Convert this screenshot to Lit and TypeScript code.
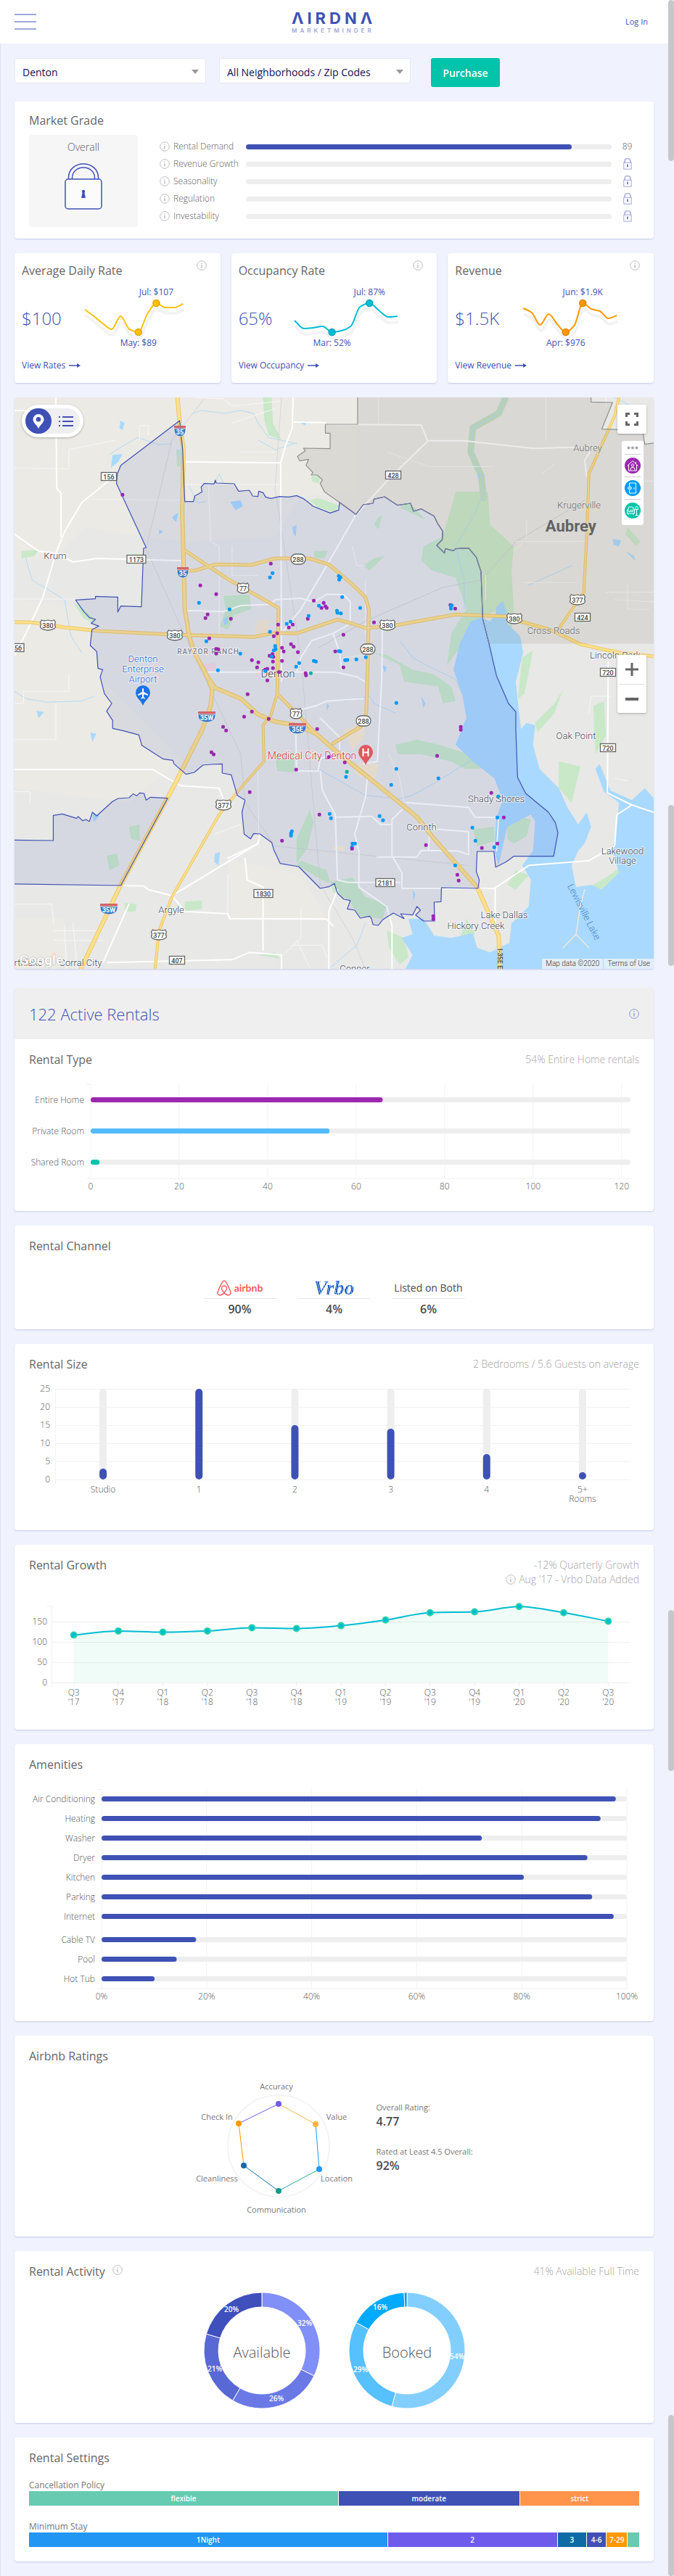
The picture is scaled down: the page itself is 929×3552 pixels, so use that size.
import { LitElement, html, svg, css } from "lit";
import { customElement } from "lit/decorators.js";

type Pt = [number, number];

/* Smooth curve through points that never overshoots them (monotone cubic). */
function curve(p: Pt[]): string {
  const n = p.length;
  const s: number[] = [];
  for (let i = 0; i < n - 1; i++) s.push((p[i + 1][1] - p[i][1]) / (p[i + 1][0] - p[i][0]));
  const m = p.map((_, i) => {
    if (i === 0) return s[0];
    if (i === n - 1) return s[n - 2];
    if (s[i - 1] * s[i] <= 0) return 0;
    return (2 * s[i - 1] * s[i]) / (s[i - 1] + s[i]);
  });
  let d = `M${p[0][0]} ${p[0][1]}`;
  for (let i = 0; i < n - 1; i++) {
    const h = (p[i + 1][0] - p[i][0]) / 3;
    d += `C${p[i][0] + h} ${p[i][1] + m[i] * h} ${p[i + 1][0] - h} ${p[i + 1][1] - m[i + 1] * h} ${p[i + 1][0]} ${p[i + 1][1]}`;
  }
  return d;
}

const infoIcon = () => html`<svg class="info" viewBox="0 0 14 14" width="14" height="14" aria-hidden="true">
  <circle cx="7" cy="7" r="6.3" fill="none" stroke="currentColor" stroke-width="1"></circle>
  <path d="M7 6v4.4M7 3.4v1.4" stroke="currentColor" stroke-width="1.4"></path>
</svg>`;

const smallLock = () => html`<svg width="12" height="16" viewBox="0 0 12 16" aria-label="Locked">
  <path d="M2 6.5V4.5a4 4 0 0 1 8 0v2" fill="none" stroke="#b5bbe2" stroke-width="2"></path>
  <rect x=".8" y="6.3" width="10.4" height="8.9" fill="#fff" stroke="#9fa8da" stroke-width="1"></rect>
  <path d="M6 8.6v3.6" stroke="#3f51b5" stroke-width="1.4"></path>
</svg>`;

/* ------------------------------------------------------------------ map */

const UX = 929 / 1568;
const mx = (u: number) => u * UX;
const my = (v: number) => 540 + v / 3;

const DENTON =
  "418,120 425,240 428,390 430,455 450,455 453,432 470,415 468,395 475,380 498,382 501,366 503,378 545,381 555,412 580,408 588,432 600,434 602,412 612,418 618,436 630,442 650,434 672,436 690,430 705,442 716,456 728,474 768,502 788,490 790,458 828,508 845,468 868,462 870,445 895,435 912,455 925,470 955,462 962,495 980,485 1010,515 1018,545 1030,578 1029,612 1016,636 1034,668 1036,650 1055,658 1060,650 1090,647 1108,685 1119,745 1123,940 1138,1045 1155,1175 1183,1290 1200,1325 1200,1400 1204,1595 1223,1662 1276,1740 1292,1783 1298,1825 1288,1922 1195,1922 1178,1945 1153,1967 1149,1902 1110,1902 1108,1985 1115,2020 1112,2055 1027,2052 1026,2110 1010,2112 1011,2190 985,2190 967,2165 978,2145 970,2130 960,2165 932,2160 940,2180 915,2157 890,2185 880,2208 868,2205 864,2180 860,2170 838,2178 825,2145 808,2140 815,2105 800,2100 785,2075 778,2035 765,2048 745,2055 720,2010 695,1965 652,1952 637,1895 632,1865 605,1830 590,1828 583,1850 568,1830 563,1740 570,1690 552,1670 538,1585 517,1578 517,1540 490,1542 472,1545 452,1575 433,1583 405,1540 402,1525 380,1520 330,1463 323,1420 285,1402 262,1393 262,1360 248,1322 260,1290 243,1250 233,1180 239,1150 228,1145 225,1075 210,1050 214,985 230,970 212,958 222,942 208,935 195,910 176,862 222,857 222,847 274,850 274,912 281,887 329,890 334,648 340,645 271,380 273,340 281,305";
const SOUTHWEST =
  "20,1855 124,1857 124,1753 145,1747 178,1765 182,1758 192,1775 200,1770 208,1778 215,1740 225,1755 262,1695 275,1683 300,1680 310,1664 318,1672 325,1660 335,1662 340,1690 350,1678 390,1682 281,2043 20,2036";
const SHARED =
  "790,458 828,508 845,468 868,462 870,445 895,435 912,455 925,470 955,462 962,495 980,485 1010,515 1018,545 1030,578 1029,612 1016,636 1034,668 1036,650 1055,658 1060,650 1090,647 1108,685 1119,745 1123,940 1138,1043";
const AUBREY_EDGE =
  "832,10 832,135 757,135 757,172 768,172 768,236 706,234 710,245 692,268 697,286 718,280 712,305 728,335 724,345 738,345 750,365 745,380 755,415";

const LAKE =
  "1095,950 1120,935 1140,950 1160,905 1170,865 1180,920 1180,960 1210,1010 1217,1080 1200,1200 1205,1290 1212,1395 1225,1370 1245,1380 1240,1460 1255,1560 1300,1640 1320,1720 1345,1790 1365,1740 1375,1800 1360,1870 1345,1900 1330,1960 1340,2050 1375,2040 1400,2060 1440,1990 1425,1900 1435,1800 1440,1700 1405,1655 1385,1560 1395,1540 1420,1650 1470,1690 1500,1640 1530,1700 1530,2400 940,2400 960,2330 935,2260 960,2245 950,2180 985,2180 1010,2250 1050,2260 1100,2240 1110,2300 1140,2320 1185,2280 1190,2200 1230,2130 1235,2020 1215,1960 1240,1900 1245,1780 1235,1750 1180,1800 1160,1960 1150,1900 1155,1760 1170,1690 1150,1600 1100,1530 1060,1460 1085,1350 1075,1250 1055,1150 1070,1040";

const GREENS = [
  "1060,415 1135,415 1140,550 1195,640 1190,740 1195,900 1190,1000 1180,940 1168,870 1155,905 1100,950 1070,1060 1040,1130 1050,1000 1085,900 1060,770 1005,740 980,700 985,640 1030,600",
  "520,845 580,840 585,900 545,925 530,985 512,970 525,900", "600,2330 640,2320 650,2345", "640,1500 685,1490 685,1575 645,1570",
  "775,2070 810,2100 835,2170 890,2180 900,2120 850,2090 820,2010 760,2030 690,1960 700,1940 760,1980",
  "870,1080 900,1090 960,1150 1010,1170 1050,1220 1060,1280 1030,1290 1020,1220 940,1200 930,1130",
  "920,1460 970,1440 1020,1460 1090,1500 1120,1560 1080,1560 1050,1530 980,1500 925,1500", "1100,1810 1150,1800 1150,1860 1110,1880",
  "1080,1200 1150,1250 1195,1310 1190,1340 1140,1320 1120,1270 1090,1240", "690,1850 720,1730 730,1780 715,1890 690,1950",
  "300,1800 325,1790 325,1860 305,1850", "248,1920 272,1910 278,1960 255,1980", "730,660 762,658 755,690 732,688",
  "612,24 632,24 635,130 655,200 625,180 615,120", "720,450 740,440 790,470 780,500 740,480", "725,350 745,350 742,380 725,370",
  "290,2115 318,2120 315,2150 292,2150", "430,2110 470,2105 470,2140 430,2150", "1215,1100 1240,1070 1220,1250 1205,1270",
  "1245,1370 1290,1290 1310,1230 1290,1330 1250,1410", "1300,1530 1350,1550 1330,1700 1300,1640", "1380,1300 1405,1280 1410,1420 1385,1500",
  "1370,2050 1410,2010 1450,1960 1430,2060 1400,2075", "900,2230 940,2260 950,2340 930,2370 905,2300", "1200,1980 1230,2000 1200,2060 1180,2040",
  "1085,2180 1105,2240 1090,2300 1070,2260", "1280,2200 1310,2180 1330,2290 1290,2330", "170,870 195,900 215,935 225,960 195,940",
  "50,660 90,655 80,680 50,690", "880,520 890,510 880,570 870,550", "845,720 870,690 895,680 860,740", "930,480 945,460 965,480 990,530",
  "1180,1790 1210,1760 1235,1770 1225,1840 1195,1870 1180,1850", "410,240 420,240 420,310 412,310", "1460,560 1490,620 1480,640 1455,590",
  "1505,2090 1521,2100 1515,2140 1500,2130",
];

const PONDS = [
  "262,262 285,258 275,290 258,315", "535,455 560,450 565,475 548,490", "400,520 415,500 410,540", "280,120 290,130 285,160 278,150",
  "85,1320 103,1325 90,1350", "210,1410 224,1415 215,1450", "500,1910 512,1905 508,1960 498,1945", "680,560 690,552 688,600 683,590",
  "1155,890 1170,865 1175,900 1180,960 1150,960", "520,940 530,930 530,960 522,965", "980,1260 990,1290 985,1310", "890,1130 900,1140 895,1165",
  "1425,610 1445,615 1440,640 1428,635", "960,2060 966,2080 962,2110", "370,570 380,580 370,590", "215,1740 232,1755 218,1780",
  "760,1290 766,1300 760,1320", "700,130 712,120 710,140", "1110,340 1118,345 1114,370", "1455,660 1475,680 1478,700",
];

const HIGHWAYS: [string, number][] = [
  ["412,10 418,130 427,240 424,500 430,900 440,1010 452,1080 480,1170 494,1230 490,1300 470,1400 405,1630 281,2040 185,2400", 5],
  ["478,1170 500,1225 560,1270 600,1335 640,1365 690,1380 735,1415 790,1500 860,1600 970,1760 1010,1850 1110,2050 1160,2250 1163,2400", 5],
  ["20,953 75,955 150,975 230,990 400,1005 590,1015 640,998 690,1000 740,970 785,943 820,960 850,978 910,970 1060,922 1180,930 1210,950 1280,985 1350,1045 1440,1080 1530,1097", 4],
  ["430,742 455,740 500,715 585,717 640,690 720,690 765,715 815,790 850,850 858,900 856,1100 852,1330 840,1385 775,1455", 4],
  ["428,655 530,775 648,895 645,1250 700,1350 735,1415", 4],
  ["645,1250 630,1340 612,1380 614,1530 555,1650 510,1750 400,2090 370,2230 360,2400", 3],
  ["1442,10 1430,100 1370,340 1365,600 1358,830 1300,980", 3],
];

const STREETS = [
  "34,590 90,660 130,668 170,705 225,690 430,700", "130,668 150,580 190,460 273,340", "130,668 100,850 60,1000 34,1090",
  "430,290 653,295 655,1200", "653,295 665,220 680,150 682,24", "680,125 757,128", "757,135 980,138 995,205 905,360 828,510 760,720 700,900 655,1000",
  "995,203 1080,203 1240,235 1380,228", "430,905 520,910 560,885 630,880 640,860 700,855 730,870 760,838 800,840 815,870 815,960 775,1000 725,1030 700,1100 690,1160",
  "480,1160 780,1160 830,1180 850,1200", "775,1000 790,1080 795,1150", "890,960 888,1190 878,1530 845,1540", "34,1563 355,1563 420,1630 510,1640 520,1690",
  "283,2043 335,2045 345,2060 400,2085 600,1870 605,1830", "400,2085 430,2150 530,2160 535,2180 760,2182 775,2210",
  "688,1400 690,1570 740,1570 745,1520 780,1490", "745,1570 750,1650 780,1750 785,2020 810,2030 930,2030", "780,1760 865,1757 885,1790 910,1790",
  "855,1590 850,1680 825,1830 835,1900 835,2050 900,2130 912,2210 912,2388", "935,1730 912,1770 912,1920 935,1990 935,2055 1150,2055 1230,1960 1370,1940 1430,1880 1435,1750 1470,1710 1521,1740",
  "945,1700 1090,1720 1105,1760 1160,1762 1155,1900", "877,1925 970,1925 980,1898 1065,1900 1090,1915 1090,1820 1000,1808 997,1900",
  "530,1930 600,1870", "570,1930 575,2020 612,2050 612,2310", "250,2362 540,2350 580,2320 655,2330 655,2388",
  "745,1350 790,1430 790,1480", "690,1320 735,1300 760,1280 845,1270", "300,2120 240,2360", "1415,1120 1413,1660 1470,1710",
  "1380,228 1360,285 1365,350", "130,24 132,400 142,420 142,600", "34,78 130,78", "786,2060 765,2150 765,2388", "1152,2055 1152,2200",
];

const LANES = [
  "34,315 160,320 160,240 270,200", "215,445 425,450", "34,858 175,858", "430,385 650,385", "485,385 490,620 510,640 510,1000", "34,1290 55,1290 55,1240 160,1240 160,1170",
  "34,1655 70,1655 70,1700", "850,780 850,1000", "880,24 880,140", "1410,24 1410,60", "1225,530 1225,610 1195,660", "1460,370 1521,370",
  "34,1440 130,1440 130,1290", "540,640 540,760 600,760", "700,1080 700,1150", "600,1560 602,1830", "530,2000 530,2160", "34,2120 120,2120 125,2200",
  "560,250 640,250", "540,130 640,70", "325,200 325,140 345,140 345,180", "1460,800 1460,900 1510,900", "1420,1260 1375,1260 1370,1330", "700,2140 700,2260 660,2330",
  "450,24 520,30 540,60 650,40", "800,1100 850,1090", "940,1700 930,1600 905,1500", "1430,1600 1460,1610", "1290,300 1260,340", "500,1830 560,1790",
  "820,640 830,720 850,720", "1130,760 1130,860", "1200,620 1360,620", "1220,790 1340,790", "1270,24 1270,200", "900,250 1000,310 1150,310",
  "170,2200 180,2388", "150,2210 155,2388", "125,2230 230,2230", "125,2270 240,2270", "680,2290 750,2290 760,2340", "690,2270 720,2380", "1410,830 1521,830", "1430,860 1521,870",
];

const CREEKS = [
  "448,90 470,78 520,90 560,78 590,90 600,130 625,190 690,215", "255,260 290,220 320,190 370,220 400,215", "60,690 75,780 150,860 165,1010 190,1080",
  "34,1240 60,1270 110,1285 190,1280 220,1260", "930,1030 960,1100 990,1130 1060,1190 1075,1250", "740,1560 800,1620 850,1670 930,1685 960,1670 1020,1610 1100,1520 1140,1500",
  "440,390 460,460 480,455", "1175,30 1160,90 1100,150 1095,250 1120,350 1125,420 1100,520 1060,640 1080,780 1080,900", "800,1280 860,1260 870,1290 920,1330",
  "600,200 640,240 690,212", "500,380 510,340 520,380", "1230,800 1330,720", "770,2380 830,2290 850,2200", "1430,24 1500,90",
];

const PURPLE =
  "285,427 630,712 466,802 503,838 730,865 753,874 748,895 757,888 760,895 483,922 478,937 537,940 716,940 647,964 681,964 672,976 870,955 645,1000 637,1012 799,1006 487,1021 503,1064 508,1066 503,1084 656,1060 677,1045 683,1055 660,1075 693,1078 780,1075 627,1093 634,1085 636,1097 586,1111 601,1120 598,1141 635,1117 656,1114 635,1144 617,1150 622,1147 649,1160 799,1141 711,1165 712,1174 1048,883 1059,898 622,1195 576,1252 586,1324 568,1345 625,1354 519,1387 526,1402 738,1396 1072,1387 1072,1399 492,1492 497,1501 765,1511 802,1534 689,1564 1017,1507 581,1657 1143,1660 743,1750 1172,1762 656,1858 991,1876 1157,1870 1121,1888 1064,1999 1067,2023 1008,2170 1008,2182";
const BLUE =
  "634,751 628,769 788,763 789,778 792,768 796,850 463,874 742,886 534,901 838,895 784,907 785,915 793,917 718,928 676,952 667,961 628,994 480,1033 640,1052 637,1070 641,1066 788,1073 792,1075 559,1084 632,1096 851,1099 829,1108 803,1111 808,1110 730,1114 735,1117 696,1123 689,1138 507,1153 617,1156 1049,888 1051,884 1049,898 922,1288 922,1561 1020,1600 805,1594 910,1627 1159,1675 767,1747 770,1765 883,1756 891,1773 1157,1762 679,1819 677,1828 677,1837 820,1870 826,1870 819,1884 1099,1804 1106,1858 1150,1885 1059,1960";
const TEAL = "723,1165 807,1573";

type Label = { t: string; x: number; y: number; c?: string };
const PLACES: Label[] = [
  { t: "Aubrey", x: 1367, y: 235, c: "dim" },
  { t: "Krugerville", x: 1347, y: 471, c: "dim" },
  { t: "Krum", x: 129, y: 682 },
  { t: "Cross Roads", x: 1288, y: 990, c: "dim" },
  { t: "Lincoln Park", x: 1432, y: 1092 },
  { t: "Denton", x: 647, y: 1169, c: "town" },
  { t: "Oak Point", x: 1340, y: 1425 },
  { t: "Shady Shores", x: 1155, y: 1687 },
  { t: "Corinth", x: 981, y: 1803 },
  { t: "Lakewood", x: 1449, y: 1902 },
  { t: "Village", x: 1449, y: 1942 },
  { t: "Argyle", x: 399, y: 2146 },
  { t: "Lake Dallas", x: 1173, y: 2167 },
  { t: "Hickory Creek", x: 1107, y: 2212 },
  { t: "Corral City", x: 187, y: 2364 },
  { t: "rthlake", x: 66, y: 2364 },
  { t: "Copper", x: 826, y: 2388 },
  { t: "Denton", x: 333, y: 1108, c: "air" },
  { t: "Enterprise", x: 333, y: 1150, c: "air" },
  { t: "Airport", x: 333, y: 1192, c: "air" },
  { t: "Medical City Denton", x: 725, y: 1510, c: "med" },
  { t: "RAYZOR RANCH", x: 485, y: 1074, c: "hood" },
];

const ROUTES: [string, number, number, "box" | "us" | "oval" | "int"][] = [
  ["156", 254, 351, "box"], ["1173", 318, 693, "box"], ["428", 914, 345, "box"], ["424", 1356, 933, "box"], ["56", 42, 1059, "box"],
  ["720", 1415, 1162, "box"], ["720", 1414, 1473, "box"], ["2181", 896, 2031, "box"], ["1830", 613, 2076, "box"], ["407", 412, 2352, "box"],
  ["77", 566, 812, "us"], ["77", 688, 1332, "us"], ["380", 111, 966, "us"], ["380", 406, 1008, "us"], ["380", 902, 966, "us"],
  ["380", 1196, 940, "us"], ["377", 1344, 862, "us"], ["377", 520, 1711, "us"], ["377", 369, 2247, "us"],
  ["288", 693, 693, "oval"], ["288", 856, 1066, "oval"], ["288", 846, 1363, "oval"],
  ["35", 419, 163, "int"], ["35", 426, 748, "int"], ["35W", 481, 1344, "int"], ["35E", 692, 1392, "int"], ["35W", 254, 2139, "int"],
];

function shield([t, u, v, kind]: [string, number, number, string]) {
  const x = Math.round(mx(u)), y = Math.round(my(v));
  const w = t.length * 5 + 6;
  if (kind === "int") {
    const h = t.length > 2 ? 12 : 8;
    return svg`<g transform="translate(${x} ${y})">
      <path d="M${-h} -3C${-h} 3 ${-h + 2} 7 0 8C${h - 2} 7 ${h} 3 ${h} -3Z" fill="#3f78c4" stroke="#fff" stroke-width=".6"></path>
      <path d="M${-h} -3.5V-7H${h}V-3.5Z" fill="#d2656b"></path>
      <text class="rt white" y="5">${t}</text></g>`;
  }
  const shape =
    kind === "box"
      ? svg`<rect x=${-w / 2} y="-5.5" width=${w} height="11"></rect>`
      : kind === "oval"
        ? svg`<rect x="-10" y="-7" width="20" height="14" rx="7"></rect>`
        : svg`<path d="M${-w / 2 + 2} -7Q${-w / 4} -5 0 -7Q${w / 4} -5 ${w / 2 - 2} -7L${w / 2} -4Q${w / 2 - 2} -1 ${w / 2} 2Q${w / 2} 6 0 7Q${-w / 2} 6 ${-w / 2} 2Q${-w / 2 + 2} -1 ${-w / 2} -4Z"></path>`;
  return svg`<g transform="translate(${x} ${y})" fill="#fff" stroke="#666" stroke-width="1.3">${shape}
    <text class="rt" y="4">${t}</text></g>`;
}

const dots = (list: string, fill: string) =>
  list.split(" ").map((p) => {
    const [u, v] = p.split(",").map(Number);
    return svg`<rect x=${(mx(u) - 2.5).toFixed(1)} y=${(my(v) - 2.5).toFixed(1)} width="5" height="5" rx="2" fill=${fill}></rect>`;
  });

@customElement("market-map")
export class MarketMap extends LitElement {
  static styles = css`
    :host { display: block; position: relative; height: 788px; border-radius: 4px; overflow: hidden; box-shadow: 0 1px 2px #c5cbea; font-family: "Roboto", sans-serif; }
    .canvas { display: block; width: 100%; height: 100%; }
    .geo * { vector-effect: non-scaling-stroke; }
    text { font-size: 13px; fill: #454a54; text-anchor: middle; paint-order: stroke; stroke: #fff; stroke-width: 2px; stroke-opacity: .7; stroke-linejoin: round; }
    .dim { fill: #6c6c6c; stroke: #e4e4e2; }
    .town { font-size: 15px; fill: #3a3a3a; }
    .air { fill: #2265d4; }
    .med { fill: #cf2936; font-size: 14px; }
    .hood { font-size: 10px; font-weight: 500; fill: #7c8499; letter-spacing: 1px; }
    .big { font-size: 22px; font-weight: 700; fill: #636363; stroke: #ddd; }
    .lake { fill: #4c86c8; stroke: none; }
    .rt { font-size: 9px; font-weight: 500; fill: #444; stroke: none; }
    .white { fill: #fff; font-weight: 700; }
    .google { font-size: 19px; fill: #fff; stroke: #8d8d8d; stroke-width: 1px; font-weight: 500; }
    button { border: 0; padding: 0; background: #fff; display: grid; place-items: center; cursor: pointer; }
    .toggle { position: absolute; left: 10px; top: 10px; display: flex; padding: 5px; border-radius: 23px; background: linear-gradient(#efeff2, #efeff2) content-box, #fff; box-shadow: 0 1px 3px #0004; }
    .toggle button { width: 39px; height: 35px; background: none; border-radius: 18px; }
    .toggle .on { width: 36px; background: #3f51b5; }
    .full { position: absolute; right: 10px; top: 10px; width: 40px; height: 40px; border-radius: 2px; box-shadow: 0 1px 3px #0004; }
    .legend { position: absolute; right: 14px; top: 60px; width: 30px; height: 116px; border-radius: 3px; background: #fff; display: flex; flex-direction: column; align-items: center; }
    .legend > * { width: 22px; }
    .legend .dots { height: 18px; }
    .legend .kind { height: 31px; border-top: 1px solid #ccc; }
    .zoom { position: absolute; right: 10px; bottom: 353px; width: 40px; border-radius: 2px; background: #fff; box-shadow: 0 1px 3px #0004; display: flex; flex-direction: column; align-items: center; }
    .zoom button { width: 34px; height: 40px; }
    .zoom .out { border-top: 1px solid #ddd; }
    .terms { position: absolute; right: 0; bottom: 0; display: flex; font-size: 10px; line-height: 14px; color: #333; }
    .terms > * { background: #f5f5f5c0; padding: 0 5px; color: inherit; text-decoration: none; }
    .terms a { border-left: 1px solid #a9d9fe; }
  `;

  render() {
    return html`
      <svg class="canvas" viewBox="20 548 881 788" preserveAspectRatio="xMidYMid slice" role="img" aria-label="Map of Denton rentals">
        <rect x="-600" y="540" width="2200" height="800" fill="#e8e8e7"></rect>
        <g class="geo" transform="translate(0 540) scale(${UX} ${1 / 3})" fill="none" stroke-linejoin="round" stroke-linecap="round">
          <polygon points="34,24 830,24 830,420 700,430 640,600 430,620 330,600 200,560 130,680 34,700" fill="#ebeae5"></polygon>
          <polygon points="34,860 200,900 230,1180 420,1520 300,1700 34,1640" fill="#ebeae5"></polygon>
          <polygon points="34,2180 150,2180 160,2388 34,2388" fill="#ebeae5"></polygon>
          <polygon points="530,1930 700,2000 760,2180 540,2180" fill="#eceae5"></polygon>
          ${GREENS.map((p) => svg`<polygon points=${p} fill="#c8e8c8"></polygon>`)}
          <polyline points="1175,30 1160,90 1100,150 1095,250 1120,350 1125,440" stroke="#c2dfc5" stroke-width="9"></polyline>
          <polygon points="470,1130 500,1120 505,1160 475,1160" fill="#f3d9e0"></polygon>
          <polygon points="800,1400 850,1370 845,1440 820,1480" fill="#f6ead0"></polygon>
          <polygon points="820,1540 880,1540 875,1600 830,1590" fill="#f6ead0"></polygon>
          <polygon points="600,945 625,945 625,1010 590,1010" fill="#f3e8d0"></polygon>
          <polygon points="775,1880 803,1880 800,1900 775,1895" fill="#f6ead0"></polygon>
          <polygon points=${LAKE} fill="#a9d9fe"></polygon>
          <polyline points="1310,2300 1340,2245 1350,2130 1360,2060" stroke="#ece9e0" stroke-width="1.5"></polyline>
          <polyline points="1340,2245 1370,2300" stroke="#ece9e0" stroke-width="1.5"></polyline>
          ${PONDS.map((p) => svg`<polygon points=${p} fill="#a9d9fe"></polygon>`)}
          ${CREEKS.map((p) => svg`<polyline points=${p} stroke="#b3dcf5" stroke-width="1"></polyline>`)}
          <polyline points="655,20 640,400 700,1100 745,2040 820,2260 850,2388" stroke="#d2d2d4" stroke-width=".8"></polyline>
          <polyline points="475,30 400,200 340,650 430,1010 560,1500 570,1700 640,1880 1090,1960" stroke="#cfd0d4" stroke-width=".8"></polyline>
          <polyline points="1360,450 1200,620 1120,780 1030,810 850,950 740,1060" stroke="#cdd0d6" stroke-width="1"></polyline>
          ${LANES.map((p) => svg`<polyline points=${p} stroke="#f7f7f7" stroke-width="1"></polyline>`)}
          ${STREETS.map((p) => svg`<polyline points=${p} stroke="#fff" stroke-width="2"></polyline>`)}
          ${HIGHWAYS.map(([p, w]) => svg`<polyline points=${p} stroke="#efc765" stroke-width=${w + 1}></polyline>`)}
          ${HIGHWAYS.map(([p, w]) => svg`<polyline points=${p} stroke="#fde08c" stroke-width=${w - 1}></polyline>`)}
          <polygon points="${AUBREY_EDGE} ${SHARED} 1530,1043 1530,210 1500,218 1495,160 1400,155 1425,45 1375,43 1375,10" fill="#776d5f" fill-opacity=".13"></polygon>
          <polyline points="${AUBREY_EDGE} 790,458" stroke="#90908f" stroke-width="1.2"></polyline>
          <polyline points="1530,210 1500,218 1495,160 1400,155 1425,45 1375,43 1375,10" stroke="#90908f" stroke-width="1.2"></polyline>
          <polygon points=${DENTON} fill="#3f51b5" fill-opacity=".1" stroke="#3f51b5" stroke-width="1.2"></polygon>
          <polyline points=${SHARED} stroke="#7b7f96" stroke-width="1.2"></polyline>
          <polygon points=${SOUTHWEST} fill="#3f51b5" fill-opacity=".1" stroke="#3f51b5" stroke-width="1.2"></polygon>
        </g>
        ${ROUTES.map(shield)}
        ${PLACES.map((l) => svg`<text class=${l.c ?? ""} x=${Math.round(mx(l.x))} y=${Math.round(my(l.y)) + 4}>${l.t}</text>`)}
        <text class="big" x=${mx(1328)} y=${my(578)}>Aubrey</text>
        <text class="lake" transform="translate(${mx(1352)} ${my(2158)}) rotate(63)">Lewisville Lake</text>
        <text class="rt" transform="translate(${mx(1158)} ${my(2346)}) rotate(90)">I-35E E</text>
        <text class="google" x="57" y="1330">Google</text>
        <g transform="translate(197 956)">
          <path d="M0 17C-3 9-10 6-10-1a10 10 0 0 1 20 0C10 6 3 9 0 17Z" fill="#1a73e8"></path>
          <path d="M0-7.500l1 1.500v4l6 3.500v1.500l-6-1.800v4l2 1.500v1l-3-1-3 1v-1l2-1.500v-4l-6 1.800v-1.500l6-3.500v-4z" fill="#fff"></path>
        </g>
        <g transform="translate(504 1038)">
          <path d="M0 17C-3 9-10 6-10-1a10 10 0 0 1 20 0C10 6 3 9 0 17Z" fill="#e0585f"></path>
          <path d="M-3.500-6v11M3.500-6v11M-3.500-.5h7" stroke="#fff" stroke-width="2"></path>
        </g>
        ${dots(PURPLE, "#9c27b0")}${dots(BLUE, "#0099fa")}${dots(TEAL, "#00b39b")}${dots("819,1891", "#9c27b0")}
      </svg>

      <div class="toggle">
        <button class="on" aria-label="Map view">
          <svg width="16" height="20" viewBox="0 0 16 20"><path fill-rule="evenodd" fill="#fff" d="M8 0a7.500 7.500 0 0 1 7.500 7.500C15.500 12 10.500 14.500 8 20 5.500 14.500.5 12 .5 7.500A7.500 7.500 0 0 1 8 0Zm0 4a3.300 3.300 0 1 0 0 6.600A3.300 3.300 0 0 0 8 4Z"></path></svg>
        </button>
        <button aria-label="List view">
          <svg width="20" height="16" viewBox="0 0 20 16" fill="none" stroke="#3f51b5" stroke-width="2"><path d="M0 2h2M0 8h2M0 14h2M5 2h15M5 8h15M5 14h15"></path></svg>
        </button>
      </div>
      <button class="full" aria-label="Full screen">
        <svg width="18" height="18" viewBox="0 0 18 18" fill="none" stroke="#666" stroke-width="3"><path d="M1.500 6V1.500H6M12 1.500h4.500V6M16.500 12v4.500H12M6 16.500H1.500V12"></path></svg>
      </button>
      <div class="legend">
        <button class="dots" aria-label="All types"><svg width="16" height="5" viewBox="0 0 16 5" fill="#a8a8a8"><circle cx="2.500" cy="2.500" r="2"></circle><circle cx="8" cy="2.500" r="2"></circle><circle cx="13.500" cy="2.500" r="2"></circle></svg></button>
        <button class="kind" aria-label="Entire homes"><svg width="22" height="22" viewBox="0 0 22 22" fill="none" stroke="#fff" stroke-width="1"><circle cx="11" cy="11" r="11" fill="#9c27b0" stroke="none"></circle><path d="M3.500 11.500 11 4.500l7.500 7M5.500 10v8h11v-8M15.500 6v2.500"></path><circle cx="11" cy="10.500" r="1.700"></circle><path d="M8 17.500v-1.500q0-2.500 3-2.500t3 2.500v1.500"></path></svg></button>
        <button class="kind" aria-label="Private rooms"><svg width="22" height="22" viewBox="0 0 22 22" fill="none" stroke="#fff" stroke-width="1"><circle cx="11" cy="11" r="11" fill="#0099fa" stroke="none"></circle><path d="M6.500 8V4h9v14h-9v-4M13 10v3"></path><circle cx="7" cy="11" r="2.200"></circle><path d="M4 11h1M9.200 11h1M7 8.800v4.400"></path></svg></button>
        <button class="kind" aria-label="Shared rooms"><svg width="22" height="22" viewBox="0 0 22 22" fill="none" stroke="#fff" stroke-width="1"><circle cx="11" cy="11" r="11" fill="#00c4a9" stroke="none"></circle><path d="M5 10V8q0-2 2-2h3q2 0 2 2v2M3.500 9.500q2 0 2 3h6q0-3 2-3v5.500h-10zM5 15v2M12 15v2M7 10.500h4M14.500 9.500q0-4.500 2-4.500t2 4.500zM16.500 9.500v8M14.500 17.500h4"></path></svg></button>
      </div>
      <div class="zoom">
        <button aria-label="Zoom in"><svg width="18" height="18" viewBox="0 0 18 18" stroke="#666" stroke-width="3"><path d="M0 9h18M9 0v18"></path></svg></button>
        <button class="out" aria-label="Zoom out"><svg width="18" height="18" viewBox="0 0 18 18" stroke="#666" stroke-width="4"><path d="M0 9h18"></path></svg></button>
      </div>
      <div class="terms"><span>Map data ©2020</span><a href="#terms">Terms of Use</a></div>
    `;
  }
}

/* ---------------------------------------------------------------- cards */

interface Stat {
  title: string;
  value: string;
  link: string;
  color: string;
  edge: string;
  hi: [number, string];
  lo: [number, string];
  start: number;
  step: number;
  y: number[];
}

const STATS: Stat[] = [
  { title: "Average Daily Rate", value: "$100", link: "View Rates", color: "#ffc107", edge: "#e0a800", hi: [8, "Jul: $107"], lo: [6, "May: $89"], start: 22, step: 12.3, y: [36, 45, 55, 63, 45, 63, 67, 42, 27, 33, 33, 28] },
  { title: "Occupancy Rate", value: "65%", link: "View Occupancy", color: "#00bcd4", edge: "#00a5bb", hi: [8, "Jul: 87%"], lo: [4, "Mar: 52%"], start: 13, step: 12.9, y: [51, 62, 61, 59, 67, 65, 59, 32, 27, 37, 46, 45] },
  { title: "Revenue", value: "$1.5K", link: "View Revenue", color: "#ff9800", edge: "#dd8300", hi: [7, "Jun: $1.9K"], lo: [5, "Apr: $976"], start: 29, step: 11.75, y: [34, 40, 57, 42, 56, 67, 58, 27, 35, 38, 48, 44] },
];

const GRADES = ["Rental Demand", "Revenue Growth", "Seasonality", "Regulation", "Investability"];

const TYPES = [
  { label: "Entire Home", value: 66, color: "#9c27b0" },
  { label: "Private Room", value: 54, color: "#56bbfb" },
  { label: "Shared Room", value: 2, color: "#00c4a9" },
];

const SIZES: [string[], number][] = [[["Studio"], 3], [["1"], 25], [["2"], 15], [["3"], 14], [["4"], 7], [["5+", "Rooms"], 2]];

const GROWTH: [string, string, number][] = [
  ["Q3", "'17", 117], ["Q4", "'17", 127], ["Q1", "'18", 124], ["Q2", "'18", 127], ["Q3", "'18", 135], ["Q4", "'18", 133], ["Q1", "'19", 140],
  ["Q2", "'19", 154], ["Q3", "'19", 172], ["Q4", "'19", 174], ["Q1", "'20", 187], ["Q2", "'20", 172], ["Q3", "'20", 151],
];

const AMENITIES: [string, number, number][] = [
  ["Air Conditioning", 97.9, 14], ["Heating", 95, 41], ["Washer", 72.4, 68], ["Dryer", 92.5, 95], ["Kitchen", 80.4, 122],
  ["Parking", 93.4, 149], ["Internet", 97.5, 176], ["Cable TV", 18, 208], ["Pool", 14.3, 235], ["Hot Tub", 10.1, 262],
];

const RADAR: { label: string; tx: number; ty: number; x: number; y: number; dot: string; line: string }[] = [
  { label: "Accuracy", tx: 111, ty: 17, x: 114, y: 37, dot: "#6f5beb", line: "#ffb545" },
  { label: "Value", tx: 194, ty: 59, x: 165, y: 65, dot: "#fbb23c", line: "#2196f3" },
  { label: "Location", tx: 194, ty: 144, x: 170, y: 127, dot: "#2196f3", line: "#26a69a" },
  { label: "Communication", tx: 111, ty: 187, x: 114, y: 157, dot: "#14998c", line: "#0e6ba5" },
  { label: "Cleanliness", tx: 29, ty: 144, x: 66, y: 122, dot: "#0e6ba5", line: "#ff9800" },
  { label: "Check In", tx: 29, ty: 59, x: 59, y: 64, dot: "#ff9800", line: "#6f5beb" },
];

const DONUTS = [
  { name: "Available", parts: [[0.322, "#818ff8", "32%"], [0.262, "#6a79e6", "26%"], [0.212, "#5868d4", "21%"], [0.204, "#3f4fbc", "20%"]] },
  { name: "Booked", parts: [[0.542, "#82cfff", "54%"], [0.288, "#57c0ff", "29%"], [0.162, "#00aaff", "16%"], [0.008, "#0098f0", ""]] },
] as { name: string; parts: [number, string, string][] }[];

const SETTINGS: { name: string; segs: [string, number, string][] }[] = [
  { name: "Cancellation Policy", segs: [["flexible", 718, "#66cbb0"], ["moderate", 420, "#3f51b5"], ["strict", 277, "#ff944a"]] },
  { name: "Minimum Stay", segs: [["1Night", 836, "#2196f3"], ["2", 395, "#6f5beb"], ["3", 66, "#0e6ba5"], ["4-6", 45, "#3f51b5"], ["7-29", 47, "#ff9800"], ["", 27, "#66cbb0"]] },
];

function donut(parts: [number, string, string][]) {
  let a = 0;
  const at = (f: number, r: number): Pt => [80 + r * Math.sin(f * 2 * Math.PI), 80 - r * Math.cos(f * 2 * Math.PI)];
  return parts.map(([f, color, label]) => {
    const b = a + f;
    const [p, q, r, s] = [at(a, 80), at(b, 80), at(b, 60), at(a, 60)];
    const big = f > 0.5 ? 1 : 0;
    const [tx, ty] = at((a + b) / 2, 70);
    a = b;
    return svg`<path d="M${p}A80 80 0 ${big} 1 ${q}L${r}A60 60 0 ${big} 0 ${s}Z" fill=${color} stroke="#fff" stroke-width="1"></path>
      <text class="pct" x=${Math.round(tx)} y=${Math.round(ty) + 3}>${label}</text>`;
  });
}

@customElement("app-root")
export class AppRoot extends LitElement {
  static styles = css`
    :host { display: block; position: relative; background: #f0f3fd; color: #5c5c5c; font: 300 12px/16px "Open Sans", sans-serif; }
    * { box-sizing: border-box; }
    h1, h2, p { margin: 0; font-weight: inherit; }
    a { color: inherit; text-decoration: none; }
    svg { display: block; }
    .thumbs { position: absolute; z-index: 2; top: 0; right: 0; bottom: 0; width: 8px; display: flex; flex-direction: column; gap: 888px; overflow: hidden; }
    .thumbs i { flex: none; height: 222px; border-radius: 4px; background: #c6c7cc; }

    header { height: 60px; padding: 0 36px 0 20px; display: grid; grid-template-columns: 1fr auto 1fr; align-items: center; background: #fff; }
    .burger { width: 30px; height: 22px; padding: 0; border: solid #9fa8da; border-width: 2px 0; background: linear-gradient(#9fa8da, #9fa8da) center / 100% 2px no-repeat; cursor: pointer; }
    .logo { width: 110px; overflow: visible; }
    svg .mark-a { font: 700 22px "Inter", sans-serif; fill: #3f51b5; letter-spacing: 5px; }
    svg .mark-b { font: 600 8px "Inter", sans-serif; fill: #9fa8da; letter-spacing: 4px; }
    .login { justify-self: end; color: #3f51b5; font-weight: 400; font-size: 11px; }

    main { padding: 20px 20px 20px 19px; margin-right: 8px; border-left: 1px solid #dfe3f5; display: flex; flex-direction: column; gap: 20px; }
    .filters { display: flex; gap: 18px; height: 40px; }
    .filters label { width: 264px; height: 35px; position: relative; }
    .filters select { width: 100%; height: 35px; padding: 3px 30px 0 10px; appearance: none; border: 1px solid #e4e7f5; border-radius: 3px; background: #fff; color: #0e0e52; font: 400 14px "Open Sans", sans-serif; }
    .filters label svg { position: absolute; right: 10px; top: 16px; pointer-events: none; }
    .buy { width: 95px; height: 40px; margin-left: 10px; border: 0; border-radius: 3px; background: #00c4a9; color: #fff; font: 600 14px "Open Sans", sans-serif; cursor: pointer; }

    .card { background: #fff; border-radius: 4px; box-shadow: 0 1px 2px #c5cbea; padding: 16px 20px 0; }
    .top { display: flex; justify-content: space-between; }
    .top h2 { font-size: 16px; line-height: 24px; font-weight: 400; color: #666; display: flex; gap: 10px; }
    .note { text-align: right; font-size: 14px; line-height: 20px; color: #a3a3a3; padding-top: 2px; }
    .note span { display: flex; gap: 4px; justify-content: end; }
    .info { flex: none; color: #bdbdbd; margin-top: 3px; }

    .grade { padding-top: 14px; padding-bottom: 16px; }
    .grade-body { display: grid; grid-template-columns: 150px 1fr; gap: 30px; padding-top: 8px; }
    .overall { height: 127px; border-radius: 4px; background: #f6f6f6; display: flex; flex-direction: column; align-items: center; gap: 12px; padding-top: 7px; font-size: 14px; line-height: 20px; }
    .grades { display: flex; flex-direction: column; padding-top: 4px; }
    .grades > div { height: 24px; display: grid; grid-template-columns: 14px 95px 1fr 33px; column-gap: 5px; align-items: center; }
    .grades .info { margin: 0; }
    .track { height: 7px; border-radius: 4px; background: #eee; }
    .fill { height: 7px; border-radius: 4px; background: #3f51b5; }
    .mark { justify-self: center; }

    .stats { display: grid; grid-template-columns: repeat(3, 1fr); gap: 15px; }
    .stat { height: 179px; padding: 12px 10px 0; display: flex; flex-direction: column; }
    .stat .info { margin: -2px 9px 0 0; }
    .stat-body { display: flex; justify-content: space-between; align-items: center; height: 106px; color: #3f51b5; }
    .stat-body strong { font-size: 24px; font-weight: 300; line-height: 32px; padding-top: 1px; }
    .stat-body svg { flex: none; overflow: visible; margin-right: 19px; }
    .view { color: #3f51b5; font-weight: 400; display: flex; align-items: center; gap: 5px; padding-top: 5px; }

    svg text { font: 300 12px "Open Sans", sans-serif; fill: #555; }
    .mid { text-anchor: middle; }
    .end { text-anchor: end; }
    .stat-body text { font-weight: 400; font-size: 12px; fill: #3f51b5; text-anchor: middle; }
    .gap-top { margin-top: 6px; }
    .active { padding: 0; }
    .active-head { height: 71px; padding: 0 20px; border-radius: 4px 4px 0 0; background: #efefef; display: flex; align-items: center; justify-content: space-between; color: #3f51b5; }
    .active-head h1 { font-size: 22px; line-height: 30px; font-weight: 300; }
    .active-head .info { color: #8c97d3; margin: 0; }
    .active-body { padding: 16px 20px 45px; }
    .plot { display: block; overflow: visible; }
    .type-plot { margin: 22px 12px 0 85px; }
    .size-plot { margin: 22px 12px 70px 36px; }
    .growth-plot { margin: 26px 12px 65px 31px; }
    .amen-plot { margin: 22px 17px 45px 100px; }
    .plot svg { overflow: visible; }
    .nss { vector-effect: non-scaling-stroke; }

    .channels { display: grid; grid-template-columns: repeat(3, 100px); justify-content: center; gap: 30px; padding: 33px 0 14px; text-align: center; }
    .channels dt { height: 28px; padding-bottom: 2px; border-bottom: 1px solid #e6e6e6; display: flex; align-items: center; justify-content: center; gap: 4px; font-size: 14px; font-weight: 400; color: #4a4a4a; }
    .channels dl, .channels dd { margin: 0; }
    .channels dd { font-size: 16px; font-weight: 600; line-height: 28px; color: #4a4a4a; }
    .airbnb { color: #ff5a5f; font: 700 14px "Lato", sans-serif; }
    .vrbo { font: italic 700 28px/26px "Liberation Serif", serif; color: transparent; background: repeating-linear-gradient(75deg, #245abc 0 2px, #7cb9ef 2px 3px); background-clip: text; padding: 0 4px; }

    .ratings { display: flex; justify-content: center; padding: 17px 0 30px; gap: 14px; }
    .ratings svg { overflow: visible; }
    .ratings text { font-size: 11px; text-anchor: middle; font-weight: 400; fill: #777; }
    .scores { width: 133px; padding-top: 34px; font-size: 11px; font-weight: 400; white-space: nowrap; color: #777; }
    .scores dl { margin: 0 0 23px; }
    .scores dd { margin: 0; font-size: 16px; font-weight: 600; line-height: 22px; color: #4a4a4a; }
    .donuts { display: flex; justify-content: center; gap: 40px; padding: 17px 0 20px; }
    svg .name { font-size: 20px; text-anchor: middle; fill: #555; }
    svg .pct { font-size: 10px; font-weight: 600; text-anchor: middle; fill: #fff; }

    .settings { padding-bottom: 20px; }
    .bar-name { padding-top: 18px; font-weight: 400; color: #777; }
    .segs { display: flex; gap: 1px; height: 20px; }
    .bar-block .bar-name { padding-bottom: 0; }
    .bar-block + .bar-block { padding-top: 3px; }
    .segs span { flex-basis: 0; min-width: 0; overflow: hidden; text-align: center; color: #fff; font-size: 10px; font-weight: 600; line-height: 20px; }
  `;

  private statCard(s: Stat) {
    const pts: Pt[] = s.y.map((y, i) => [s.start + i * s.step, y]);
    const d = curve(pts);
    const hi = pts[s.hi[0]], lo = pts[s.lo[0]];
    return html`<section class="card stat">
      <div class="top"><h2>${s.title}</h2>${infoIcon()}</div>
      <div class="stat-body">
        <strong>${s.value}</strong>
        <svg width="180" height="94" viewBox="0 0 180 94">
          <path d=${d} transform="translate(1 8)" fill="none" stroke="#f3f3f3" stroke-width="4"></path>
          <path d=${d} fill="none" stroke=${s.color} stroke-width="2"></path>
          <circle cx=${hi[0]} cy=${hi[1]} r="4.500" fill=${s.color} stroke=${s.edge} stroke-width="1.500"></circle>
          <circle cx=${lo[0]} cy=${lo[1]} r="4.500" fill=${s.color} stroke=${s.edge} stroke-width="1.500"></circle>
          <text x=${hi[0]} y="16">${s.hi[1]}</text>
          <text x=${lo[0]} y="86">${s.lo[1]}</text>
        </svg>
      </div>
      <a class="view" href="#view">${s.link}
        <svg width="16" height="6" viewBox="0 0 16 6"><path d="M0 3h13" stroke="#3f51b5" stroke-width="1.500"></path><path d="M11 0l5 3-5 3z" fill="#3f51b5"></path></svg>
      </a>
    </section>`;
  }

  private typeChart() {
    const ticks = [0, 20, 40, 60, 80, 100, 120];
    return html`<div class="type-plot"><svg class="plot" width="100%" height="130">
      <path d="M-6 .5H0M-6 130H0" stroke="#f0f0f0"></path>
      ${ticks.map((t) => svg`<line x1="${(t / 122) * 100}%" x2="${(t / 122) * 100}%" y1="0" y2="130" stroke="#f3f3f3"></line>
        <text class="mid" x="${(t / 122) * 100}%" y="145">${t}</text>`)}
      <line x1="0" x2="100%" y1="130" y2="130" stroke="#f0f0f0"></line>
      ${TYPES.map((t, i) => svg`
        <text class="end" x="-9" y=${26 + i * 43}>${t.label}</text>
        <rect width="100%" height="7" y=${18 + i * 43} rx="3.500" fill="#eee"></rect>
        <rect width="${(t.value / 122) * 100}%" height="7" y=${18 + i * 43} rx="3.500" fill=${t.color}></rect>`)}
    </svg></div>`;
  }

  private sizeChart() {
    return html`<div class="size-plot"><svg class="plot" width="100%" height="125">
      <path d="M.5 0V131" stroke="#f3f3f3"></path>
      ${[25, 20, 15, 10, 5, 0].map((t, i) => svg`<line x1="0" x2="100%" y1=${i * 25 + 0.5} y2=${i * 25 + 0.5} stroke="#f1f1f1"></line>
        <text class="end" x="-7" y=${i * 25 + 4}>${t}</text>`)}
      ${SIZES.map(([lines, v], i) => {
        const x = `${((i + 0.5) / 6) * 100}%`;
        return svg`<svg x=${x} width="1" height="1">
          <rect x="-5" y="0" width="10" height="125" rx="5" fill="#eee"></rect>
          <rect x="-5" y=${125 - v * 5} width="10" height=${v * 5} rx="5" fill="#3f51b5"></rect>
          ${lines.map((l, k) => svg`<text class="mid" y=${143 + k * 13}>${l}</text>`)}
        </svg>`;
      })}
    </svg></div>`;
  }

  private growthChart() {
    const y = (v: number) => 106 - v * 0.56;
    const pts: Pt[] = GROWTH.map((g, i) => [((i + 0.5) / 13) * 1000, y(g[2])]);
    const d = curve(pts);
    return html`<div class="growth-plot"><svg class="plot" width="100%" height="106">
      <path d="M-6 1H.5V112" fill="none" stroke="#f0f0f0"></path>
      ${[0, 50, 100, 150].map((t) => svg`<line x1="0" x2="100%" y1=${y(t) + 0.5} y2=${y(t) + 0.5} stroke="#f0f0f0"></line>
        <text class="end" x="-6" y=${y(t) + 4}>${t}</text>`)}
      <svg width="100%" height="106" viewBox="0 0 1000 106" preserveAspectRatio="none">
        <path d="${d}V106H${pts[0][0]}Z" fill="#00c47f" fill-opacity=".06"></path>
        <path class="nss" d=${d} fill="none" stroke="#00bcd4" stroke-width="2"></path>
      </svg>
      ${GROWTH.map((g, i) => svg`<svg x="${((i + 0.5) / 13) * 100}%" width="1" height="1">
        <path d="M0 106v5" stroke="#eee"></path>
        <circle cx="0" cy=${y(g[2])} r="4" fill="#00bcd4" stroke="#2bd4a8" stroke-width="2"></circle>
        <text class="mid" y="124">${g[0]}</text><text class="mid" y="137">${g[1]}</text>
      </svg>`)}
    </svg></div>`;
  }

  private amenityChart() {
    return html`<div class="amen-plot"><svg class="plot" width="100%" height="275">
      <path d="M-6 .5H0M-6 275H0" stroke="#f0f0f0"></path>
      ${[0, 20, 40, 60, 80, 100].map((t) => svg`<line x1="${t}%" x2="${t}%" y1="0" y2="275" stroke="#f3f3f3"></line>
        <text class="mid" x="${t}%" y="290">${t}%</text>`)}
      <line x1="0" x2="100%" y1="275" y2="275" stroke="#f0f0f0"></line>
      ${AMENITIES.map(([label, v, y]) => svg`
        <text class="end" x="-9" y=${y + 4}>${label}</text>
        <rect width="100%" height="7" y=${y - 4} rx="3.500" fill="#eee"></rect>
        <rect width="${v}%" height="7" y=${y - 4} rx="3.500" fill="#3f51b5"></rect>`)}
    </svg></div>`;
  }

  render() {
    return html`
      <div class="thumbs" aria-hidden="true"><i></i><i></i><i></i><i></i></div>
      <header>
        <button class="burger" aria-label="Menu"></button>
        <svg class="logo" width="110" height="30" viewBox="0 0 110 30" role="img" aria-label="AirDNA MarketMinder">
          <text class="mark-a" x="0" y="18">ΛIRDNΛ</text>
          <text class="mark-b" x="0" y="30">MARKETMINDER</text>
        </svg>
        <a class="login" href="#login">Log In</a>
      </header>
      <main>
        <div class="filters">
          <label><select aria-label="Market"><option>Denton</option></select>
            <svg width="10" height="6" viewBox="0 0 10 6"><path d="M0 0h10L5 6z" fill="#999"></path></svg></label>
          <label><select aria-label="Neighborhood"><option>All Neighborhoods / Zip Codes</option></select>
            <svg width="10" height="6" viewBox="0 0 10 6"><path d="M0 0h10L5 6z" fill="#999"></path></svg></label>
          <button class="buy">Purchase</button>
        </div>

        <section class="card grade">
          <div class="top"><h2>Market Grade</h2></div>
          <div class="grade-body">
            <div class="overall">Overall
              <svg width="52" height="64" viewBox="0 0 52 64" fill="none" stroke="#3f51b5" stroke-width="1.500">
                <path d="M5.500 22V20C5.500 9 14 1 26 1s20.500 8 20.500 19v2M10.500 22v-1.500C10.500 12 17 6 26 6s15.500 6 15.500 14.500V22"></path>
                <rect x="1" y="22" width="50" height="41" rx="4" fill="#fbfbfb"></rect>
                <circle cx="26" cy="39" r="2.200" fill="#3f51b5" stroke="none"></circle>
                <path d="M25 39h2l2 9h-6z" fill="#3f51b5" stroke="none"></path>
              </svg>
            </div>
            <div class="grades">
              ${GRADES.map((g, i) => html`<div>
                ${infoIcon()}<span>${g}</span>
                <div class="track">${i === 0 ? html`<div class="fill" style="width:89%"></div>` : ""}</div>
                <span class="mark">${i === 0 ? "89" : smallLock()}</span>
              </div>`)}
            </div>
          </div>
        </section>

        <div class="stats">${STATS.map((s) => this.statCard(s))}</div>

        <market-map></market-map>

        <section class="card active gap-top">
          <div class="active-head"><h1>122 Active Rentals</h1>${infoIcon()}</div>
          <div class="active-body">
            <div class="top"><h2>Rental Type</h2><p class="note">54% Entire Home rentals</p></div>
            ${this.typeChart()}
          </div>
        </section>

        <section class="card">
          <div class="top"><h2>Rental Channel</h2></div>
          <div class="channels">
            <dl><dt><svg width="20" height="22" viewBox="0 0 20 22" fill="none" stroke="#ff5a5f" stroke-width="1.400"><path d="M10 17.500C7.500 14.500 6.500 12.800 6.500 11.500a3.500 3.500 0 0 1 7 0c0 1.300-1 3-3.500 6-2 2.400-3.700 3.500-5.500 3.500-2.500 0-4-2-3.300-4.500C2 13.500 6.500 4.500 7.500 2.800 8.200 1.500 9 1 10 1s1.800.5 2.500 1.800c1 1.700 5.500 10.700 6.300 13.700.7 2.500-.8 4.500-3.300 4.500-1.800 0-3.500-1.100-5.500-3.500Z"></path></svg><span class="airbnb">airbnb</span></dt><dd>90%</dd></dl>
            <dl><dt><span class="vrbo">Vrbo</span></dt><dd>4%</dd></dl>
            <dl><dt>Listed on Both</dt><dd>6%</dd></dl>
          </div>
        </section>

        <section class="card">
          <div class="top"><h2>Rental Size</h2><p class="note">2 Bedrooms / 5.6 Guests on average</p></div>
          ${this.sizeChart()}
        </section>

        <section class="card">
          <div class="top"><h2>Rental Growth</h2><p class="note">-12% Quarterly Growth<br /><span>${infoIcon()} Aug '17 - Vrbo Data Added</span></p></div>
          ${this.growthChart()}
        </section>

        <section class="card">
          <div class="top"><h2>Amenities</h2></div>
          ${this.amenityChart()}
        </section>

        <section class="card">
          <div class="top"><h2>Airbnb Ratings</h2></div>
          <div class="ratings">
            <svg width="235" height="190" viewBox="0 0 235 190">
              <circle cx="114" cy="95" r="70" fill="none" stroke="#f4f4f4" stroke-width="2"></circle>
              ${RADAR.map((r, i) => {
                const n = RADAR[(i + 1) % RADAR.length];
                return svg`<line x1=${r.x} y1=${r.y} x2=${n.x} y2=${n.y} stroke=${r.line}></line>`;
              })}
              ${RADAR.map((r) => svg`<circle cx=${r.x} cy=${r.y} r="4" fill=${r.dot}></circle><text x=${r.tx} y=${r.ty}>${r.label}</text>`)}
            </svg>
            <div class="scores">
              <dl><dt>Overall Rating:</dt><dd>4.77</dd></dl>
              <dl><dt>Rated at Least 4.5 Overall:</dt><dd>92%</dd></dl>
            </div>
          </div>
        </section>

        <section class="card">
          <div class="top"><h2>Rental Activity ${infoIcon()}</h2><p class="note">41% Available Full Time</p></div>
          <div class="donuts">
            ${DONUTS.map((d) => html`<svg width="160" height="160" viewBox="0 0 160 160">${donut(d.parts)}<text class="name" x="80" y="90">${d.name}</text></svg>`)}
          </div>
        </section>

        <section class="card settings">
          <div class="top"><h2>Rental Settings</h2></div>
          ${SETTINGS.map((s) => html`<div class="bar-block">
            <p class="bar-name">${s.name}</p>
            <div class="segs">${s.segs.map(([t, w, c]) => html`<span style="flex-grow:${w};background:${c}">${t}</span>`)}</div>
          </div>`)}
        </section>
      </main>
    `;
  }
}
